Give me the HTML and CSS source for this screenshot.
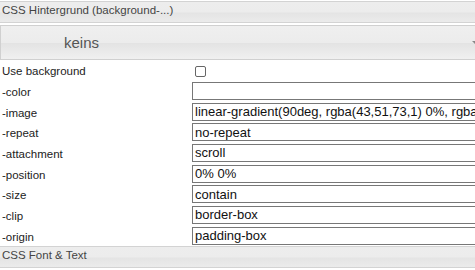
FILE: index.html
```html
<!DOCTYPE html>
<html>
	<head>
		<meta charset="UTF-8">
		<title>CSS Hintergrund</title>
		<link rel="stylesheet" href="styles.css">
	</head>
	<body>
		<div id="panel">
			<div class="head">CSS Hintergrund (background-...)</div>
			<div class="picker">
				<span class="picker-text">keins</span>
				<span class="arrow"></span>
			</div>
			<div class="rows">
				<div class="row">
					<label>Use background</label>
					<div class="cell"><input type="checkbox" class="check"></div>
				</div>
				<div class="row">
					<label>-color</label>
					<div class="cell"><input type="text" value=""></div>
				</div>
				<div class="row">
					<label>-image</label>
					<div class="cell"><input type="text" value="linear-gradient(90deg, rgba(43,51,73,1) 0%, rgba(12,18,33,1) 100%)"></div>
				</div>
				<div class="row">
					<label>-repeat</label>
					<div class="cell"><input type="text" value="no-repeat"></div>
				</div>
				<div class="row">
					<label>-attachment</label>
					<div class="cell"><input type="text" value="scroll"></div>
				</div>
				<div class="row">
					<label>-position</label>
					<div class="cell"><input type="text" value="0% 0%"></div>
				</div>
				<div class="row">
					<label>-size</label>
					<div class="cell"><input type="text" value="contain"></div>
				</div>
				<div class="row">
					<label>-clip</label>
					<div class="cell"><input type="text" value="border-box"></div>
				</div>
				<div class="row">
					<label>-origin</label>
					<div class="cell"><input type="text" value="padding-box"></div>
				</div>
			</div>
			<div class="head">CSS Font &amp; Text</div>
		</div>
	</body>
</html>
```

FILE: styles.css
```css
* {
	margin: 0;
	padding: 0;
	box-sizing: border-box;
}

html, body {
	overflow: hidden;
	background: #fff;
}

body {
	padding-top: 1px;
	font-family: "Liberation Sans", Arial, sans-serif;
	color: #222;
}

#panel {
	width: 482px;
}

.head {
	height: 22px;
	line-height: 17px;
	padding-left: 2px;
	font-size: 11.5px;
	color: #444;
	border-top: 1px solid #d3d3d3;
	border-bottom: 1px solid #d3d3d3;
	background: linear-gradient(#ededed 0%, #ececec 50%, #e4e4e4 55%, #ebebeb 100%);
}

.picker {
	position: relative;
	margin-top: 2px;
	height: 35px;
	border-top: 1px solid #d0d0d0;
	border-bottom: 1px solid #d0d0d0;
	border-left: 1px solid #d0d0d0;
	background: linear-gradient(#efefef 0%, #ececec 50%, #e3e3e3 52%, #f0f0f0 100%);
	display: flex;
	align-items: center;
}

.picker-text {
	margin-left: 63px;
	font-size: 15px;
	color: #555;
}

.arrow {
	position: absolute;
	left: 471px;
	top: 15px;
	width: 0;
	height: 0;
	border-left: 4px solid transparent;
	border-right: 4px solid transparent;
	border-top: 4px solid #888;
}

.rows {
	display: flex;
	flex-direction: column;
}

.row {
	height: 20.67px;
	display: flex;
	align-items: center;
}

.row label {
	width: 192px;
	padding-left: 2px;
	padding-top: 2px;
	font-size: 11.5px;
	color: #222;
}

.cell {
	flex: 1;
	display: flex;
	align-items: center;
}

.cell input[type="text"] {
	width: 100%;
	height: 18px;
	border: 1px solid #777;
	padding: 0 2px 0 2px;
	font-family: "Liberation Sans", Arial, sans-serif;
	font-size: 13px;
	color: #111;
	outline: none;
}

.check {
	-webkit-appearance: none;
	appearance: none;
	margin-left: 3px;
	width: 11px;
	height: 11px;
	border: 1px solid #666;
	border-radius: 2px;
	background: #fff;
	position: relative;
	top: 1px;
}
```
